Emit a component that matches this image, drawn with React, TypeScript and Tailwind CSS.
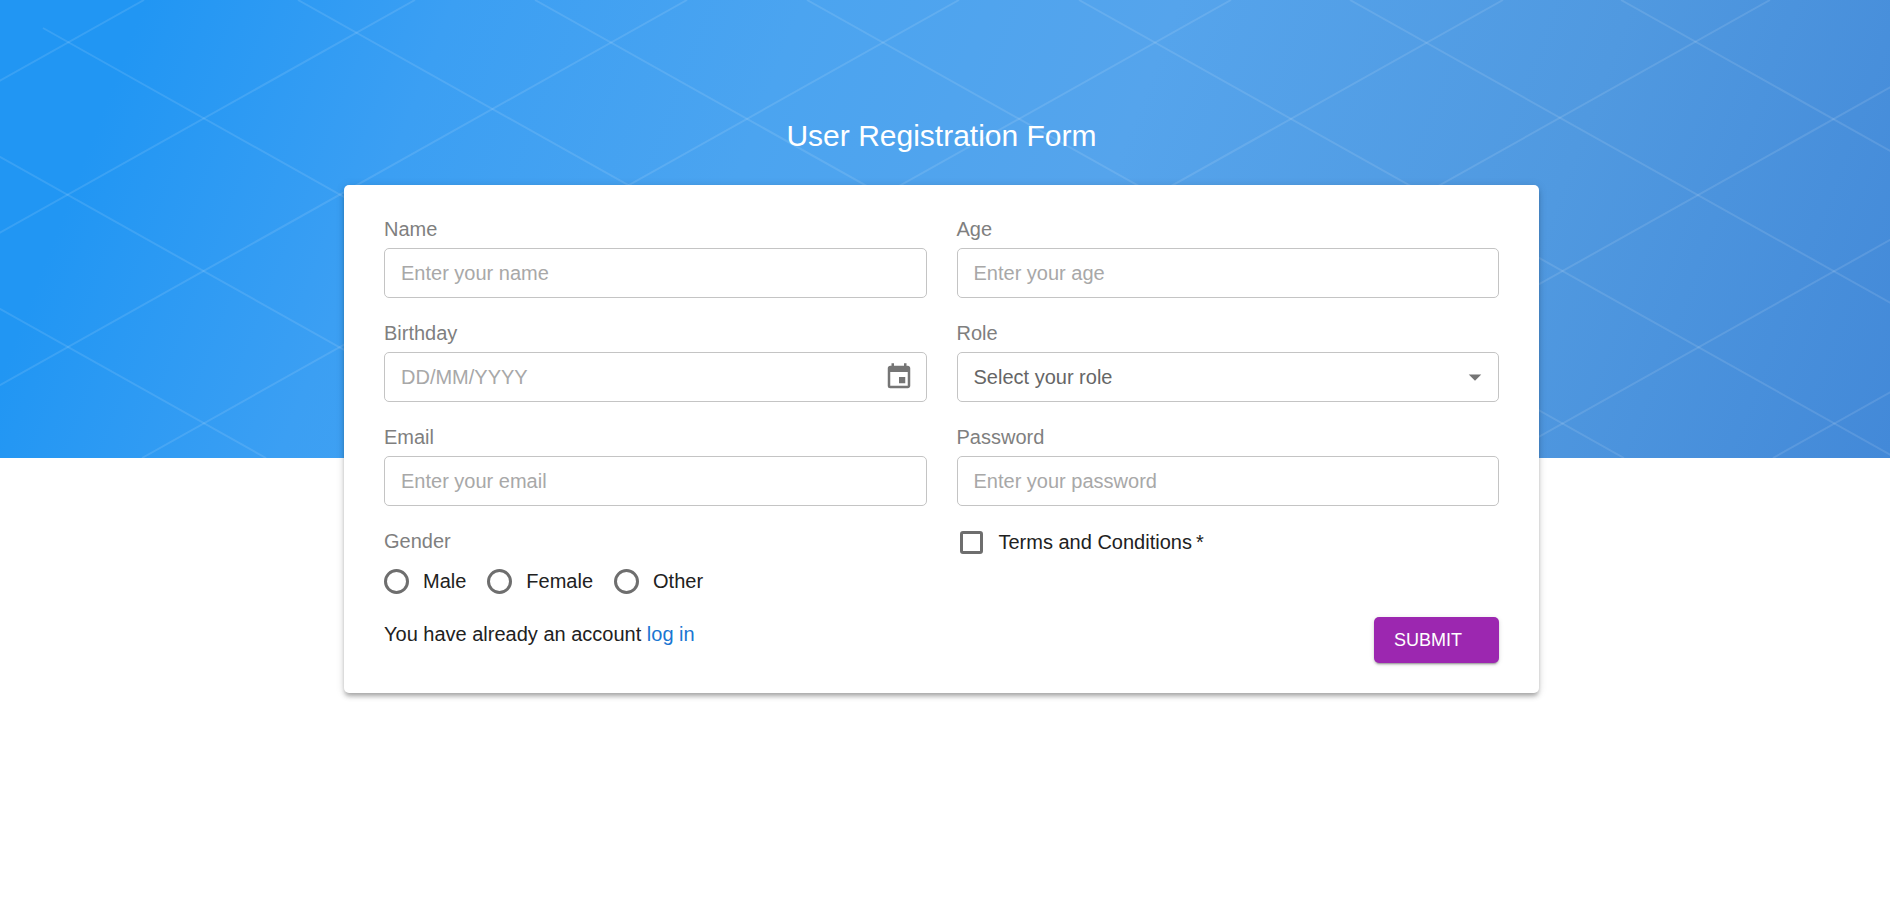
import type { ReactNode } from "react";
import { MdArrowDropDown, MdEvent } from "react-icons/md";

// Each line crosses the top edge of the banner at the given x.
const FALLING = [-551, -280, 298, 535, 807, 1079, 1350, 1621];
const RISING = [144, 415, 687, 959, 1231, 1503, 1770, 2046, 2318, 2590];

const controlClass =
  "h-[50px] w-full rounded-[5px] border border-[#c4c4c4] bg-white px-[16px] text-[20px] text-[#212121] placeholder:text-[#a8a8a8] focus:border-[#1976d2] focus:outline-none";

function Banner() {
  return (
    <div className="col-start-1 row-start-1 h-[458px] bg-[linear-gradient(111deg,#2196f3_7%,#3b9ff3_22%,#4ba4f0_39%,#55a4ec_57%,#5099e0_79%,#4389d8_100%)]">
      <svg
        className="size-full"
        viewBox="0 0 1890 458"
        preserveAspectRatio="xMidYMin slice"
        stroke="#ffffff"
        strokeOpacity="0.11"
        strokeWidth="2"
        aria-hidden="true"
      >
        <line x1="43" y1="28" x2="809" y2="458" />
        {FALLING.map((x) => (
          <line key={x} x1={x} y1="0" x2={x + 817} y2="458" />
        ))}
        {RISING.map((x) => (
          <line key={x} x1={x} y1="0" x2={x - 817} y2="458" />
        ))}
      </svg>
    </div>
  );
}

function Field({ id, label, children }: { id: string; label: string; children: ReactNode }) {
  return (
    <div className="flex flex-col gap-[5px]">
      <label htmlFor={id} className="self-start leading-[28px] text-[#7f7f7f]">
        {label}
      </label>
      {children}
    </div>
  );
}

function GenderOption({ value }: { value: string }) {
  return (
    <label className="flex items-center gap-[14px]">
      <input
        type="radio"
        name="gender"
        value={value}
        className="size-[25px] appearance-none rounded-full border-[3px] border-[#6e6e6e] checked:border-[8px] checked:border-[#1976d2]"
      />
      {value}
    </label>
  );
}

export default function App() {
  return (
    <div className="grid grid-cols-1 bg-white font-['Liberation_Sans',Arial,sans-serif] text-[20px] text-[#212121]">
      <Banner />
      <main className="col-start-1 row-start-1 flex flex-col items-center gap-[29px] pt-[116px] pr-[7px] pb-[60px]">
        <h1 className="text-[30px] leading-[40px] text-white">User Registration Form</h1>
        <form
          className="flex w-full max-w-[1195px] flex-col rounded-[5px] bg-white px-[40px] py-[30px] shadow-[0_4px_4px_-2px_rgba(0,0,0,0.2),0_4px_5px_0_rgba(0,0,0,0.14),0_1px_10px_0_rgba(0,0,0,0.12)]"
          onSubmit={(event) => event.preventDefault()}
        >
          <div className="grid grid-cols-2 gap-x-[30px] gap-y-[21px]">
            <Field id="name" label="Name">
              <input id="name" type="text" placeholder="Enter your name" className={controlClass} />
            </Field>
            <Field id="age" label="Age">
              <input id="age" type="text" inputMode="numeric" placeholder="Enter your age" className={controlClass} />
            </Field>
            <Field id="birthday" label="Birthday">
              <div className="flex h-[50px] items-center rounded-[5px] border border-[#c4c4c4] pr-[12px] pl-[16px] focus-within:border-[#1976d2]">
                <input
                  id="birthday"
                  type="text"
                  placeholder="DD/MM/YYYY"
                  className="min-w-0 flex-1 placeholder:text-[#a8a8a8] focus:outline-none"
                />
                <button type="button" aria-label="Choose date" className="text-[#757575]">
                  <MdEvent size={30} />
                </button>
              </div>
            </Field>
            <Field id="role" label="Role">
              <div className="grid items-center">
                <select
                  id="role"
                  defaultValue=""
                  className="col-start-1 row-start-1 h-[50px] w-full appearance-none rounded-[5px] border border-[#c4c4c4] bg-white px-[16px] text-[#666666] focus:border-[#1976d2] focus:outline-none"
                >
                  <option value="">Select your role</option>
                </select>
                <MdArrowDropDown
                  size={30}
                  className="pointer-events-none col-start-1 row-start-1 mr-[9px] justify-self-end text-[#757575]"
                />
              </div>
            </Field>
            <Field id="email" label="Email">
              <input id="email" type="email" placeholder="Enter your email" className={controlClass} />
            </Field>
            <Field id="password" label="Password">
              <input id="password" type="password" placeholder="Enter your password" className={controlClass} />
            </Field>
            <fieldset>
              <legend className="leading-[28px] text-[#7f7f7f]">Gender</legend>
              <div className="mt-[5px] flex h-[42px] items-center gap-[21px]">
                <GenderOption value="Male" />
                <GenderOption value="Female" />
                <GenderOption value="Other" />
              </div>
            </fieldset>
            <label className="flex items-center gap-[16px] self-start pl-[3px] leading-[30px]">
              <input
                type="checkbox"
                required
                className="size-[23px] appearance-none rounded-[3px] border-[3px] border-[#6e6e6e] checked:border-[#1976d2] checked:bg-[#1976d2]"
              />
              <span>Terms and Conditions&thinsp;*</span>
            </label>
          </div>
          <div className="mt-[15px] flex items-start justify-between">
            <p className="leading-[34px]">
              You have already an account{" "}
              <a href="#login" className="text-[#1976d2]">
                log in
              </a>
            </p>
            <button
              type="submit"
              className="h-[46px] w-[125px] rounded-[5px] bg-[#9c27b0] px-[20px] text-left text-[18px] text-white shadow-[0_3px_1px_-2px_rgba(0,0,0,0.2),0_2px_2px_0_rgba(0,0,0,0.14),0_1px_5px_0_rgba(0,0,0,0.12)]"
            >
              SUBMIT
            </button>
          </div>
        </form>
      </main>
    </div>
  );
}
